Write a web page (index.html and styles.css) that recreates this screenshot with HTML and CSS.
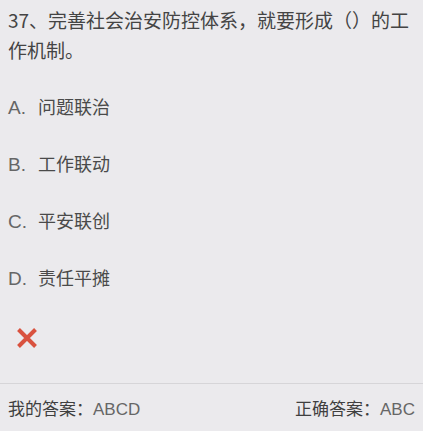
FILE: index.html
```html
<!DOCTYPE html>
<html lang="zh-CN">
<head>
<meta charset="utf-8">
<link rel="stylesheet" href="styles.css">
</head>
<body>
<div class="page">
  <div class="question">37、完善社会治安防控体系，就要形成（）的工作机制。</div>
  <ul class="options">
    <li class="option"><span class="key lat">A.</span><span>问题联治</span></li>
    <li class="option"><span class="key lat">B.</span><span>工作联动</span></li>
    <li class="option"><span class="key lat">C.</span><span>平安联创</span></li>
    <li class="option"><span class="key lat">D.</span><span>责任平摊</span></li>
  </ul>
  <div class="result">
    <svg class="wrong" width="24" height="24" viewBox="0 0 24 24">
      <path d="M3.5 3.5 L20.5 20.5 M20.5 3.5 L3.5 20.5" stroke="#d9523f" stroke-width="4" stroke-linecap="butt"/>
    </svg>
  </div>
  <div class="footer">
    <span>我的答案：<span class="lat">ABCD</span></span>
    <span>正确答案：<span class="lat">ABC</span></span>
  </div>
</div>
</body>
</html>
```

FILE: styles.css
```css
html, body {
  margin: 0;
  padding: 0;
  background: #ebeaed;
}
body {
  font-family: "Noto Sans CJK SC", sans-serif;
  color: #4a4a4a;
}
.lat {
  font-family: "Liberation Sans", Arial, sans-serif;
  color: #666;
}
.page {
  display: flex;
  flex-direction: column;
  height: 431px;
}
.question {
  padding: 5px 8px 0 8px;
  font-size: 19px;
  line-height: 30px;
  color: #444;
}
.options {
  list-style: none;
  margin: 0;
  padding: 29px 8px 0 8px;
  display: flex;
  flex-direction: column;
  gap: 31px;
}
.option {
  display: flex;
  align-items: baseline;
  font-size: 18px;
  line-height: 24px;
  color: #4a4a4a;
}
.key {
  width: 30px;
  font-size: 19px;
}
.result {
  padding: 35px 0 0 15px;
  height: 24px;
}
.wrong {
  display: block;
}
.footer {
  margin-top: auto;
  border-top: 1px solid #d6d5d8;
  height: 47px;
  display: flex;
  justify-content: space-between;
  align-items: center;
  padding: 0 8px;
  font-size: 17px;
  color: #3f3f3f;
}
```
